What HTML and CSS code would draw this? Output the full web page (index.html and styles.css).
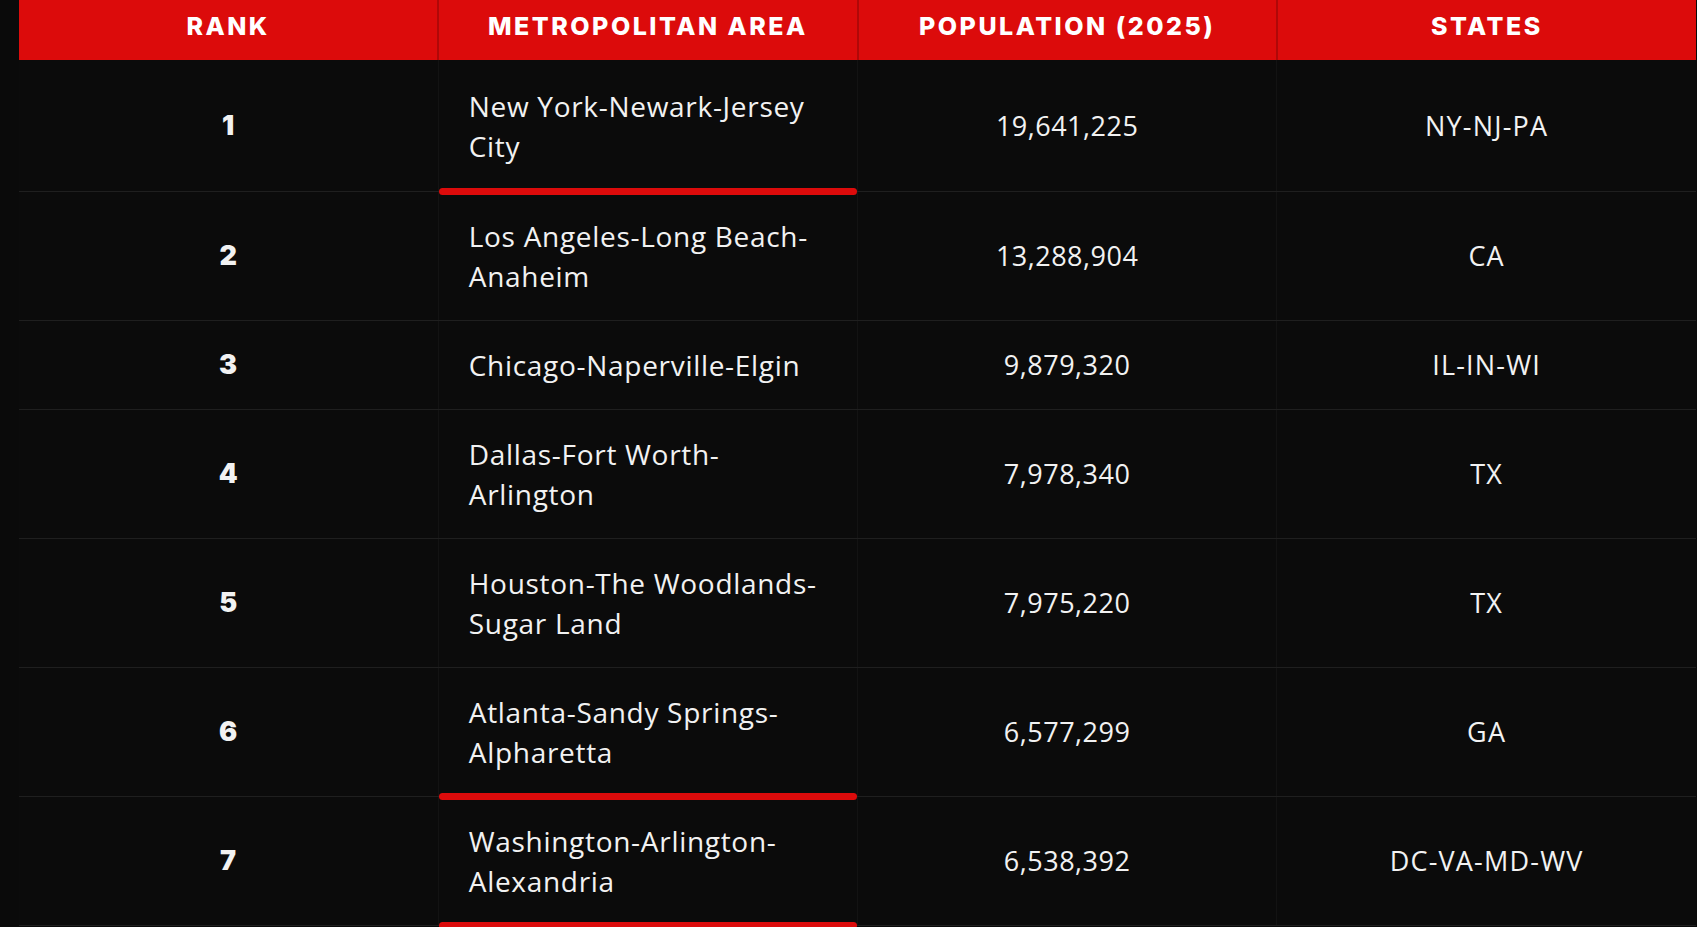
FILE: index.html
```html
<!DOCTYPE html>
<html lang="en">
<head>
<meta charset="utf-8">
<title>Largest Metropolitan Areas</title>
<link rel="stylesheet" href="styles.css">
</head>
<body>
<div class="page">
  <table class="metro-table">
    <thead>
      <tr>
        <th>Rank</th>
        <th>Metropolitan Area</th>
        <th>Population (2025)</th>
        <th>States</th>
      </tr>
    </thead>
    <tbody>
      <tr>
        <td class="rank">1</td>
        <td class="area hl">New York-Newark-Jersey City</td>
        <td class="num">19,641,225</td>
        <td class="num states">NY-NJ-PA</td>
      </tr>
      <tr>
        <td class="rank">2</td>
        <td class="area">Los Angeles-Long Beach-Anaheim</td>
        <td class="num">13,288,904</td>
        <td class="num states">CA</td>
      </tr>
      <tr>
        <td class="rank">3</td>
        <td class="area">Chicago-Naperville-Elgin</td>
        <td class="num">9,879,320</td>
        <td class="num states">IL-IN-WI</td>
      </tr>
      <tr>
        <td class="rank">4</td>
        <td class="area">Dallas-Fort Worth-Arlington</td>
        <td class="num">7,978,340</td>
        <td class="num states">TX</td>
      </tr>
      <tr>
        <td class="rank">5</td>
        <td class="area">Houston-The Woodlands-Sugar Land</td>
        <td class="num">7,975,220</td>
        <td class="num states">TX</td>
      </tr>
      <tr>
        <td class="rank">6</td>
        <td class="area hl">Atlanta-Sandy Springs-Alpharetta</td>
        <td class="num">6,577,299</td>
        <td class="num states">GA</td>
      </tr>
      <tr>
        <td class="rank">7</td>
        <td class="area hl">Washington-Arlington-Alexandria</td>
        <td class="num">6,538,392</td>
        <td class="num states">DC-VA-MD-WV</td>
      </tr>
    </tbody>
  </table>
</div>
</body>
</html>
```

FILE: styles.css
```css
html, body {
  margin: 0;
  padding: 0;
  background: #0a0a0a;
  color: #f2f2f2;
  font-family: "Open Sans", "Liberation Sans", sans-serif;
}

.page {
  padding-left: 19px;
  height: 927px;
  overflow: hidden;
}

.metro-table {
  width: 1677px;
  table-layout: fixed;
  border-collapse: collapse;
  background: #0b0b0b;
}

.metro-table th {
  height: 60px;
  padding: 0 0 9px;
  background: #dc0b0b;
  color: #ffffff;
  font-family: "Inter", "Liberation Sans", sans-serif;
  font-weight: 800;
  font-size: 25px;
  letter-spacing: 2.5px;
  text-transform: uppercase;
  text-align: center;
  vertical-align: middle;
  border-right: 2px solid #b00808;
  box-sizing: border-box;
}

.metro-table th:last-child {
  border-right: none;
}

.metro-table td {
  padding: 24px 32px;
  font-size: 27px;
  line-height: 40px;
  letter-spacing: 0.5px;
  vertical-align: middle;
  border-bottom: 1px solid #1f1f1f;
  border-right: 1px solid #131313;
}

.metro-table tbody tr:first-child td {
  padding-top: 26px;
  padding-bottom: 25px;
}

.metro-table td:last-child {
  border-right: none;
}

.rank {
  text-align: center;
  font-weight: 900;
  font-family: "Inter", "Liberation Sans", sans-serif;
  font-size: 25px;
}

.metro-table td.area {
  text-align: left;
  position: relative;
  padding-left: 30px;
  padding-right: 30px;
  font-size: 28px;
  letter-spacing: 0.7px;
}

.num {
  text-align: center;
}

.metro-table td.states {
  letter-spacing: 1.2px;
}

.area.hl::after {
  content: "";
  position: absolute;
  left: 0;
  right: 0;
  bottom: -4px;
  height: 7px;
  border-radius: 4px;
  background: #dc0b0b;
  z-index: 1;
}
```
